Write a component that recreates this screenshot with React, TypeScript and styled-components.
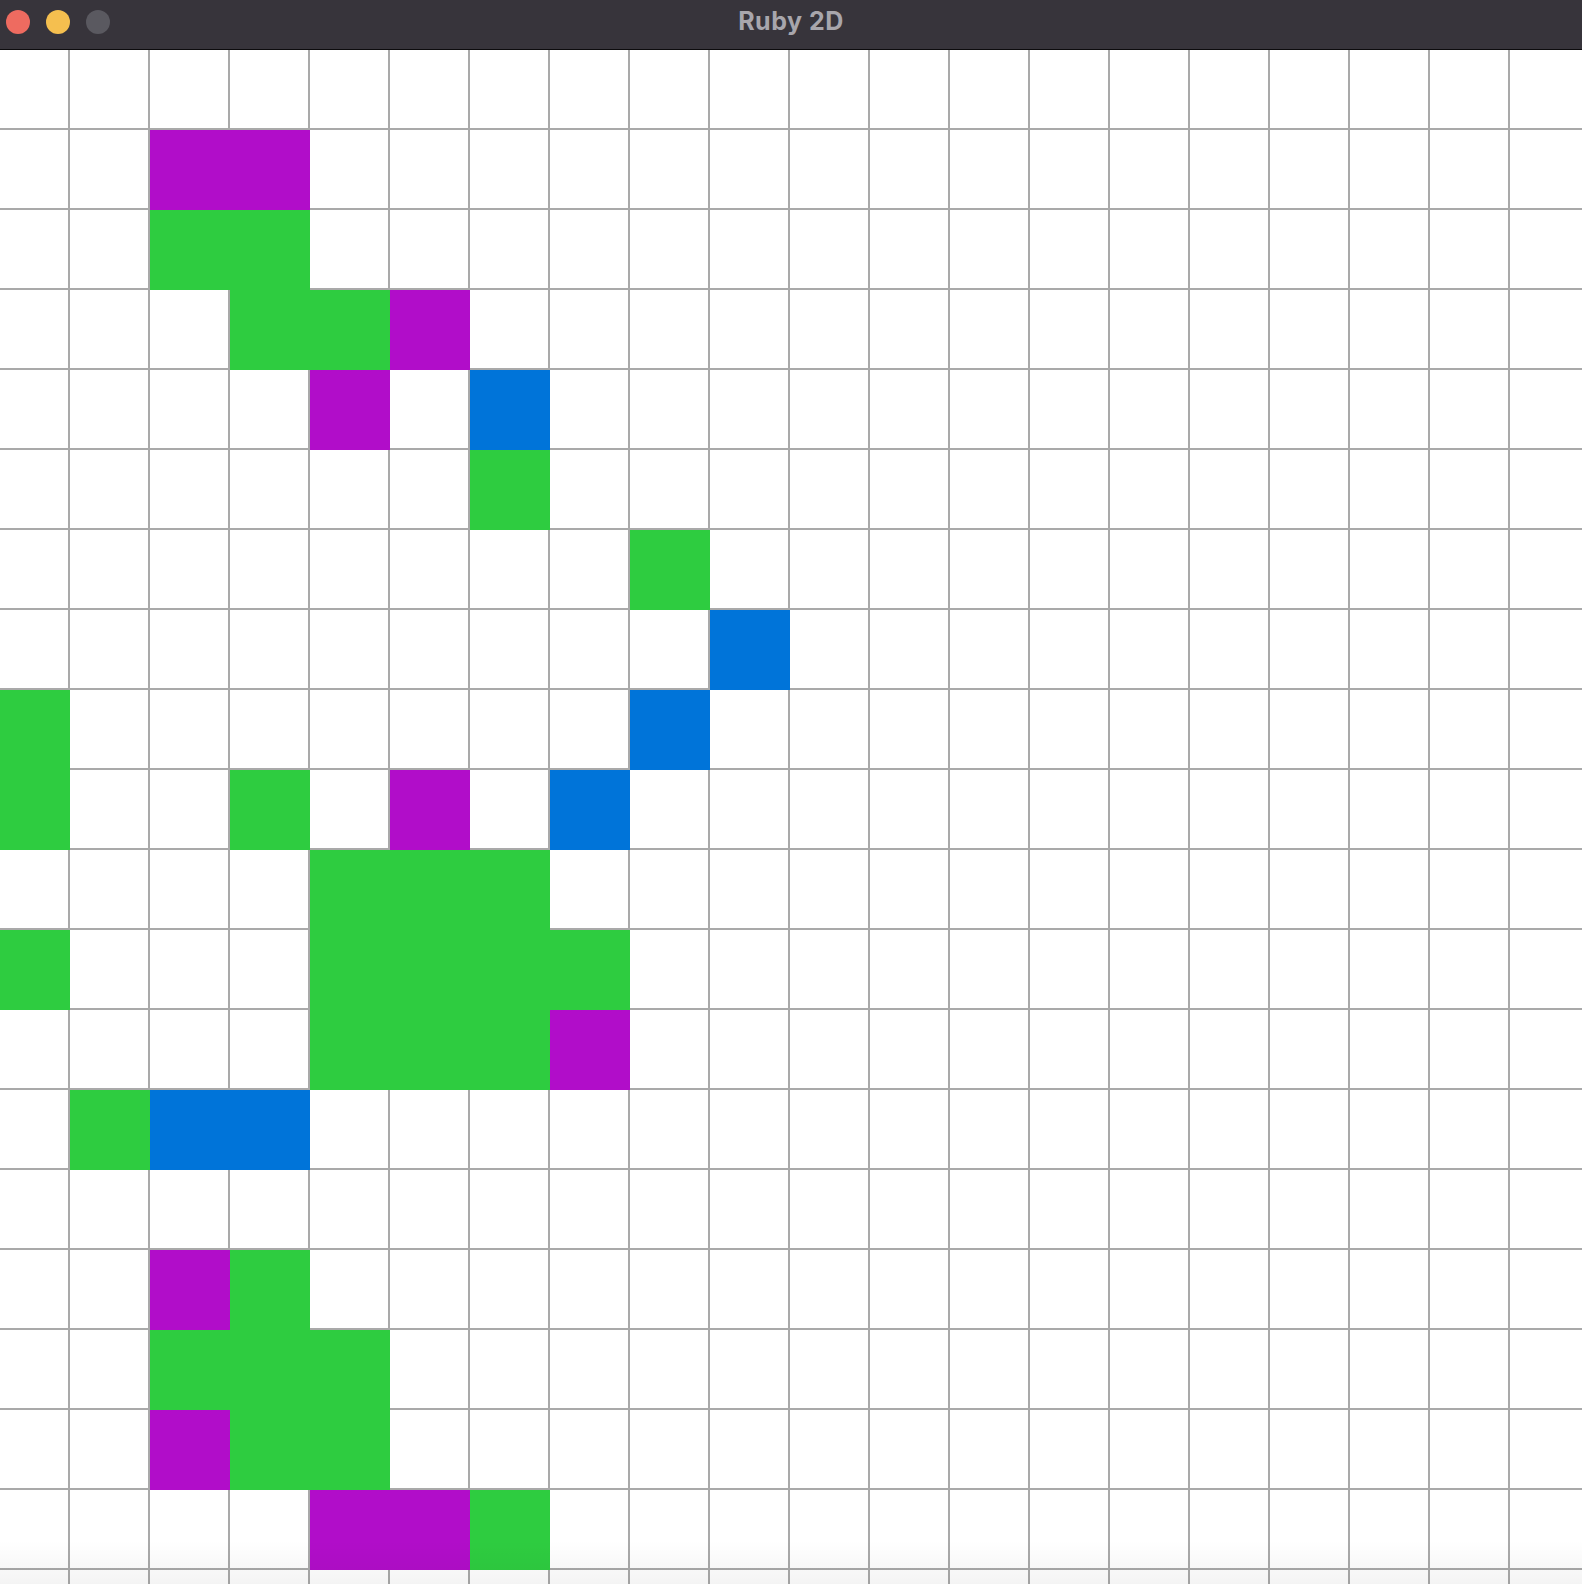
import styled, { createGlobalStyle } from 'styled-components';

const GlobalStyle = createGlobalStyle`
  html, body {
    margin: 0;
    padding: 0;
    background: #ffffff;
    overflow: hidden;
  }
`;

const COLORS: Record<string, string> = {
  P: '#b10dc9',
  G: '#2ecc40',
  B: '#0074d9',
};

// one string per row, one char per column (col 0 is the half-hidden one on the left)
const BOARD = [
  '....................',
  '..PP................',
  '..GG................',
  '...GGP..............',
  '....P.B.............',
  '......G.............',
  '........G...........',
  '.........B..........',
  'G.......B...........',
  'G..G.P.B............',
  '....GGG.............',
  'G...GGGG............',
  '....GGGP............',
  '.GBB................',
  '....................',
  '..PG................',
  '..GGG...............',
  '..PGG...............',
  '....PPG.............',
  '....................',
];

const Window = styled.div`
  width: 100vw;
  height: 100vh;
  display: flex;
  flex-direction: column;
  overflow: hidden;
`;

const TitleBar = styled.div`
  position: relative;
  flex: none;
  height: 49px;
  background: #37343b;
  border-bottom: 1px solid #0c0b0d;
  display: flex;
  align-items: center;
  justify-content: center;
`;

const Lights = styled.div`
  position: absolute;
  left: 6px;
  top: 10px;
  display: flex;
  gap: 16px;
`;

const Light = styled.span<{ color: string }>`
  width: 24px;
  height: 24px;
  border-radius: 50%;
  background: ${(p) => p.color};
`;

const Title = styled.div`
  font-family: Inter, 'Liberation Sans', sans-serif;
  font-weight: 700;
  font-size: 25px;
  letter-spacing: 0.5px;
  color: #a8a6ac;
  margin-top: -8px;
  margin-left: 0;
`;

const Canvas = styled.div`
  position: relative;
  flex: 1;
  overflow: hidden;
`;

const Board = styled.div`
  display: grid;
  grid-template-columns: repeat(20, 80px);
  grid-auto-rows: 80px;
  margin-left: -10px;
`;

const Cell = styled.div<{ fill?: string }>`
  box-sizing: border-box;
  background: ${(p) => p.fill ?? '#ffffff'};
  border-right: 2px solid ${(p) => p.fill ?? '#a9a9a9'};
  border-bottom: 2px solid ${(p) => p.fill ?? '#a9a9a9'};
`;

const BottomFade = styled.div`
  position: absolute;
  left: 0;
  right: 0;
  bottom: 0;
  height: 44px;
  background: linear-gradient(rgba(0, 0, 0, 0), rgba(0, 0, 0, 0.045));
  pointer-events: none;
`;

export default function App() {
  return (
    <>
      <GlobalStyle />
      <Window>
        <TitleBar>
          <Lights>
            <Light color="#ee6b60" />
            <Light color="#f5bf4f" />
            <Light color="#5a5960" />
          </Lights>
          <Title>Ruby 2D</Title>
        </TitleBar>
        <Canvas>
          <Board>
            {BOARD.map((row, r) =>
              row.split('').map((ch, c) => <Cell key={`${r}-${c}`} fill={COLORS[ch]} />)
            )}
          </Board>
          <BottomFade />
        </Canvas>
      </Window>
    </>
  );
}
